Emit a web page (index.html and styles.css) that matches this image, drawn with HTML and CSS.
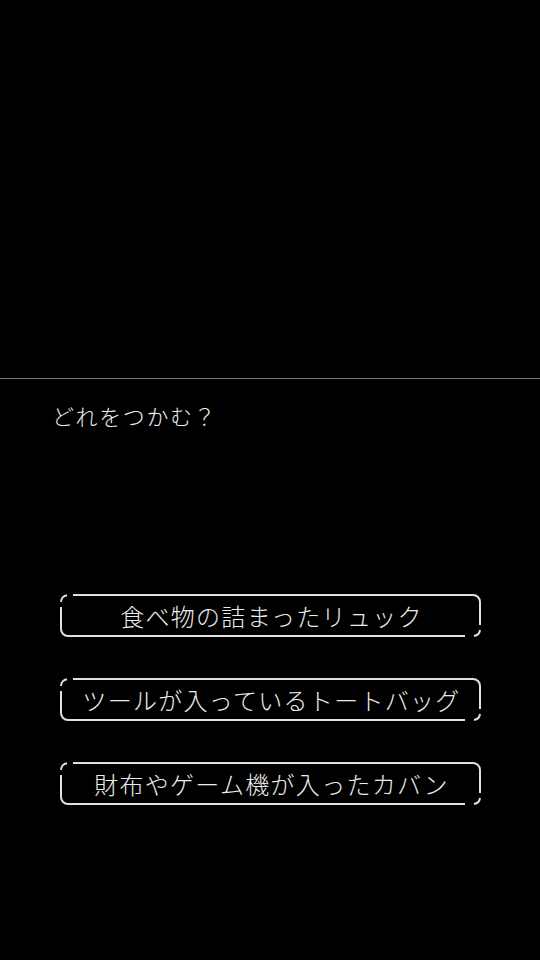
FILE: index.html
```html
<!DOCTYPE html>
<html lang="ja">
<head>
<meta charset="utf-8">
<link rel="stylesheet" href="styles.css">
</head>
<body>
<div class="screen">
  <div class="stage"></div>
  <div class="divider"></div>
  <div class="panel">
    <p class="question">どれをつかむ？</p>
    <div class="choices">
      <div class="choice">
        <svg class="frame" width="421" height="43" viewBox="0 0 421 43"><path d="M1,8 A7,7 0 0 1 7,1.2"/><path d="M13,1 H413 A7,7 0 0 1 420,8 V31"/><path d="M1,13 V35 A7,7 0 0 0 8,42 H405"/><path d="M420,36 A7,7 0 0 1 414,42"/></svg>
        <span class="label">食べ物の詰まったリュック</span>
      </div>
      <div class="choice">
        <svg class="frame" width="421" height="43" viewBox="0 0 421 43"><path d="M1,8 A7,7 0 0 1 7,1.2"/><path d="M13,1 H413 A7,7 0 0 1 420,8 V31"/><path d="M1,13 V35 A7,7 0 0 0 8,42 H405"/><path d="M420,36 A7,7 0 0 1 414,42"/></svg>
        <span class="label">ツールが入っているトートバッグ</span>
      </div>
      <div class="choice">
        <svg class="frame" width="421" height="43" viewBox="0 0 421 43"><path d="M1,8 A7,7 0 0 1 7,1.2"/><path d="M13,1 H413 A7,7 0 0 1 420,8 V31"/><path d="M1,13 V35 A7,7 0 0 0 8,42 H405"/><path d="M420,36 A7,7 0 0 1 414,42"/></svg>
        <span class="label">財布やゲーム機が入ったカバン</span>
      </div>
    </div>
  </div>
</div>
</body>
</html>
```
FILE: styles.css
```css
html, body {
  margin: 0;
  padding: 0;
  background: #000;
}
.screen {
  width: 540px;
  height: 960px;
  background: #000;
  color: #ececec;
  font-family: "Noto Sans CJK JP", "Noto Sans", sans-serif;
  font-weight: 300;
  display: flex;
  flex-direction: column;
}
.stage {
  height: 378px;
}
.divider {
  height: 1px;
  background: #7a7a7a;
}
.panel {
  display: flex;
  flex-direction: column;
}
.question {
  margin: 20px 0 0 52px;
  font-size: 22px;
  line-height: 32px;
  letter-spacing: 1.6px;
}
.choices {
  margin-top: 163px;
  padding-left: 60px;
  display: flex;
  flex-direction: column;
  gap: 41px;
}
.choice {
  position: relative;
  width: 421px;
  height: 43px;
  display: flex;
  align-items: center;
  justify-content: center;
}
.frame {
  position: absolute;
  left: 0;
  top: 0;
  fill: none;
  stroke: #e0e0e0;
  stroke-width: 2;
}
.label {
  font-size: 24px;
  line-height: 43px;
  letter-spacing: 1.3px;
  padding-left: 2px;
}
```
